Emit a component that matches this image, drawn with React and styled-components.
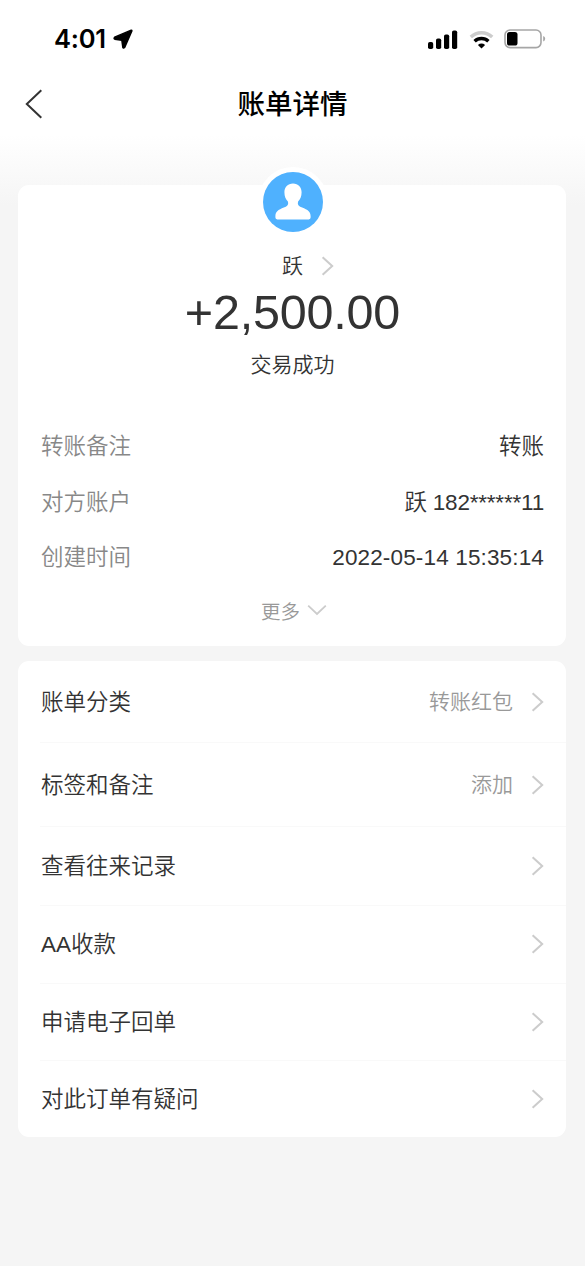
import styled, { createGlobalStyle } from "styled-components";

const GlobalStyle = createGlobalStyle`
  * {
    box-sizing: border-box;
  }

  body {
    margin: 0;
    background: #f5f5f5;
    font-family: "Liberation Sans", "Noto Sans CJK SC", sans-serif;
    font-weight: 350;
    color: #333;
  }
`;

const Page = styled("div")`
  width: 585px;
  min-height: 1266px;
  margin: 0 auto;
  background: linear-gradient(#fff 0, #fff 135px, #f5f5f5 205px);
`;

const StatusBar = styled("div")`
  display: flex;
  align-items: center;
  justify-content: space-between;
  height: 78px;
  padding: 0 39px 0 54px;
`;

const StatusGroup = styled("div")`
  display: flex;
  align-items: center;
  gap: ${({ $gap }) => $gap}px;
`;

const Clock = styled("span")`
  font-family: Inter, sans-serif;
  font-size: 25.5px;
  font-weight: 600;
  line-height: 30px;
  letter-spacing: -0.2px;
  color: #000;
`;

const NavBar = styled("header")`
  display: grid;
  grid-template-columns: 60px 1fr 60px;
  align-items: center;
  height: 52px;
  padding: 0 25px;
`;

const BackButton = styled("button")`
  display: flex;
  padding: 0;
  border: 0;
  background: none;
`;

const Title = styled("h1")`
  margin: 0;
  padding-top: 2px;
  font-size: 27.5px;
  font-weight: 500;
  line-height: 40px;
  text-align: center;
  color: #000;
`;

const Card = styled("section")`
  margin: 0 19px 0 18px;
  border-radius: 11px;
  background: #fff;
`;

const BillCard = styled(Card)`
  height: 461px;
  margin-top: 55px;
`;

const MenuCard = styled(Card)`
  margin-top: 15px;
  padding-left: 22px;
`;

const Summary = styled("div")`
  display: flex;
  flex-direction: column;
  align-items: center;
  padding: 0 0 37px 1px;
`;

const Avatar = styled("div")`
  width: 70px;
  height: 70px;
  margin-top: -18px;
  border: 5px solid #fff;
  border-radius: 50%;
  background: #fff;

  svg {
    display: block;
  }
`;

const NameRow = styled("div")`
  display: grid;
  grid-template-columns: 1fr auto 1fr;
  align-items: center;
  align-self: stretch;
  height: 28px;
  margin-top: 15px;
  font-size: 21px;
  line-height: 28px;

  svg {
    grid-column: 3;
    margin-left: 18px;
  }
`;

const Name = styled("span")`
  grid-column: 2;
`;

const Amount = styled("div")`
  height: 67px;
  font-size: 48.5px;
  font-weight: 400;
  line-height: 64px;
  letter-spacing: -0.2px;
`;

const Status = styled("div")`
  height: 34px;
  font-size: 21px;
  line-height: 35px;
`;

const DetailRow = styled("div")`
  display: flex;
  align-items: center;
  justify-content: space-between;
  height: 55.5px;
  padding: 3px 22px 0 23px;
  font-size: 22.5px;
  line-height: 30px;
`;

const DetailLabel = styled("span")`
  color: #888;
`;

const DetailValue = styled("span")`
  letter-spacing: ${({ $spacing }) => $spacing || 0}px;
`;

const MoreButton = styled("button")`
  display: flex;
  align-items: center;
  justify-content: center;
  gap: 7px;
  width: 100%;
  height: 50px;
  padding: 1px 0 0 4px;
  border: 0;
  background: none;
  font: inherit;
  font-size: 19.5px;
  color: #999;
`;

const MenuRow = styled("div")`
  display: flex;
  align-items: center;
  height: ${({ $height }) => $height}px;
  padding-right: 22px;
  border-bottom: 1px solid #f9f9f9;
  font-size: 22.5px;
  line-height: 30px;

  &:last-child {
    border-bottom: 0;
  }
`;

const MenuLabel = styled("span")`
  flex: 1;
  padding: 2px 0 0 1px;
`;

const MenuValue = styled("span")`
  margin-right: 18px;
  padding-top: 1px;
  font-size: 21px;
  color: #999;
`;

const ChevronRight = () => (
  <svg width="13" height="20" viewBox="0 0 13 20" fill="none">
    <path d="M1.6 1.2 L11.2 10 L1.6 18.8" stroke="#ccc" strokeWidth="2" />
  </svg>
);

const ChevronDown = () => (
  <svg width="20" height="12" viewBox="0 0 20 12" fill="none">
    <path d="M1.2 1.6 L10 10 L18.8 1.6" stroke="#ccc" strokeWidth="1.8" />
  </svg>
);

const BackIcon = () => (
  <svg width="18" height="30" viewBox="0 0 18 30" fill="none">
    <path d="M16.3 1.2 L1.8 15 L16.3 28.8" stroke="#333" strokeWidth="2" />
  </svg>
);

const LocationIcon = () => (
  <svg width="20" height="20" viewBox="0 0 20 20">
    <path
      d="M18.2 1.2 L1.6 8.2 Q0.4 9.6 1.8 10.2 L8.8 11.2 L9.8 18.4 Q10.4 19.8 11.6 18.6 L18.9 1.9 Q19 1 18.2 1.2 Z"
      fill="#000"
      stroke="#000"
      strokeWidth="1.4"
      strokeLinejoin="round"
    />
  </svg>
);

const SignalIcon = () => (
  <svg width="30" height="19" viewBox="0 0 30 19">
    <rect x="0" y="12" width="5.2" height="7" rx="1.8" />
    <rect x="8" y="8.5" width="5.2" height="10.5" rx="1.8" />
    <rect x="16" y="4.5" width="5.2" height="14.5" rx="1.8" />
    <rect x="24" y="0.5" width="5.2" height="18.5" rx="1.8" />
  </svg>
);

const WifiIcon = () => (
  <svg width="25" height="19" viewBox="0 0 25 19" fill="none">
    <path d="M1.8 7 A15.4 15.4 0 0 1 23.2 7" stroke="#ccc" strokeWidth="3.4" />
    <path d="M5.6 11.2 A10 10 0 0 1 19.4 11.2" stroke="#000" strokeWidth="3.4" />
    <path d="M12.5 18.6 L8.9 14.9 Q12.5 12 16.1 14.9 Z" fill="#000" />
  </svg>
);

const BatteryIcon = () => (
  <svg width="42" height="20" viewBox="0 0 42 20">
    <rect
      x="1"
      y="1"
      width="36"
      height="17.6"
      rx="5"
      fill="none"
      stroke="#a6a6a6"
      strokeWidth="1.6"
    />
    <rect x="3" y="3" width="10.5" height="13.6" rx="2.6" />
    <path d="M39.2 7 Q41.2 7.8 41.2 9.8 Q41.2 11.8 39.2 12.6 Z" fill="#a6a6a6" />
  </svg>
);

const AvatarIcon = () => (
  <svg width="60" height="60" viewBox="0 0 60 60">
    <circle cx="30" cy="30" r="30" fill="#4fb1fe" />
    <path
      d="M30 11.5 C35.2 11.5 38.6 15 38.6 20.3 C38.6 24.5 37.2 27.4 35.1 29.6 C34.4 32 35 33.6 37.2 34.7 C42.5 37 47.6 38.3 47.6 44 V45.6 Q47.6 47.4 45.8 47.4 H14.2 Q12.4 47.4 12.4 45.6 V44 C12.4 38.3 17.5 37 22.8 34.7 C25 33.6 25.6 32 24.9 29.6 C22.8 27.4 21.4 24.5 21.4 20.3 C21.4 15 24.8 11.5 30 11.5 Z"
      fill="#fff"
    />
  </svg>
);

const details = [
  { label: "转账备注", value: "转账" },
  { label: "对方账户", value: "跃 182******11", spacing: -0.2 },
  { label: "创建时间", value: "2022-05-14 15:35:14", spacing: 0.15 },
];

const menu = [
  { label: "账单分类", value: "转账红包", height: 82 },
  { label: "标签和备注", value: "添加", height: 84 },
  { label: "查看往来记录", height: 79 },
  { label: "AA收款", height: 77.5 },
  { label: "申请电子回单", height: 77.5 },
  { label: "对此订单有疑问", height: 76 },
];

const App = () => {
  return (
    <Page>
      <GlobalStyle />
      <StatusBar>
        <StatusGroup $gap={7}>
          <Clock>4:01</Clock>
          <LocationIcon />
        </StatusGroup>
        <StatusGroup $gap={10.5}>
          <SignalIcon />
          <WifiIcon />
          <BatteryIcon />
        </StatusGroup>
      </StatusBar>
      <NavBar>
        <BackButton aria-label="返回">
          <BackIcon />
        </BackButton>
        <Title>账单详情</Title>
      </NavBar>

      <BillCard>
        <Summary>
          <Avatar>
            <AvatarIcon />
          </Avatar>
          <NameRow>
            <Name>跃</Name>
            <ChevronRight />
          </NameRow>
          <Amount>+2,500.00</Amount>
          <Status>交易成功</Status>
        </Summary>
        {details.map(({ label, value, spacing }) => (
          <DetailRow key={label}>
            <DetailLabel>{label}</DetailLabel>
            <DetailValue $spacing={spacing}>{value}</DetailValue>
          </DetailRow>
        ))}
        <MoreButton>
          更多
          <ChevronDown />
        </MoreButton>
      </BillCard>

      <MenuCard>
        {menu.map(({ label, value, height }) => (
          <MenuRow key={label} $height={height}>
            <MenuLabel>{label}</MenuLabel>
            {value && <MenuValue>{value}</MenuValue>}
            <ChevronRight />
          </MenuRow>
        ))}
      </MenuCard>
    </Page>
  );
};

export default App;
